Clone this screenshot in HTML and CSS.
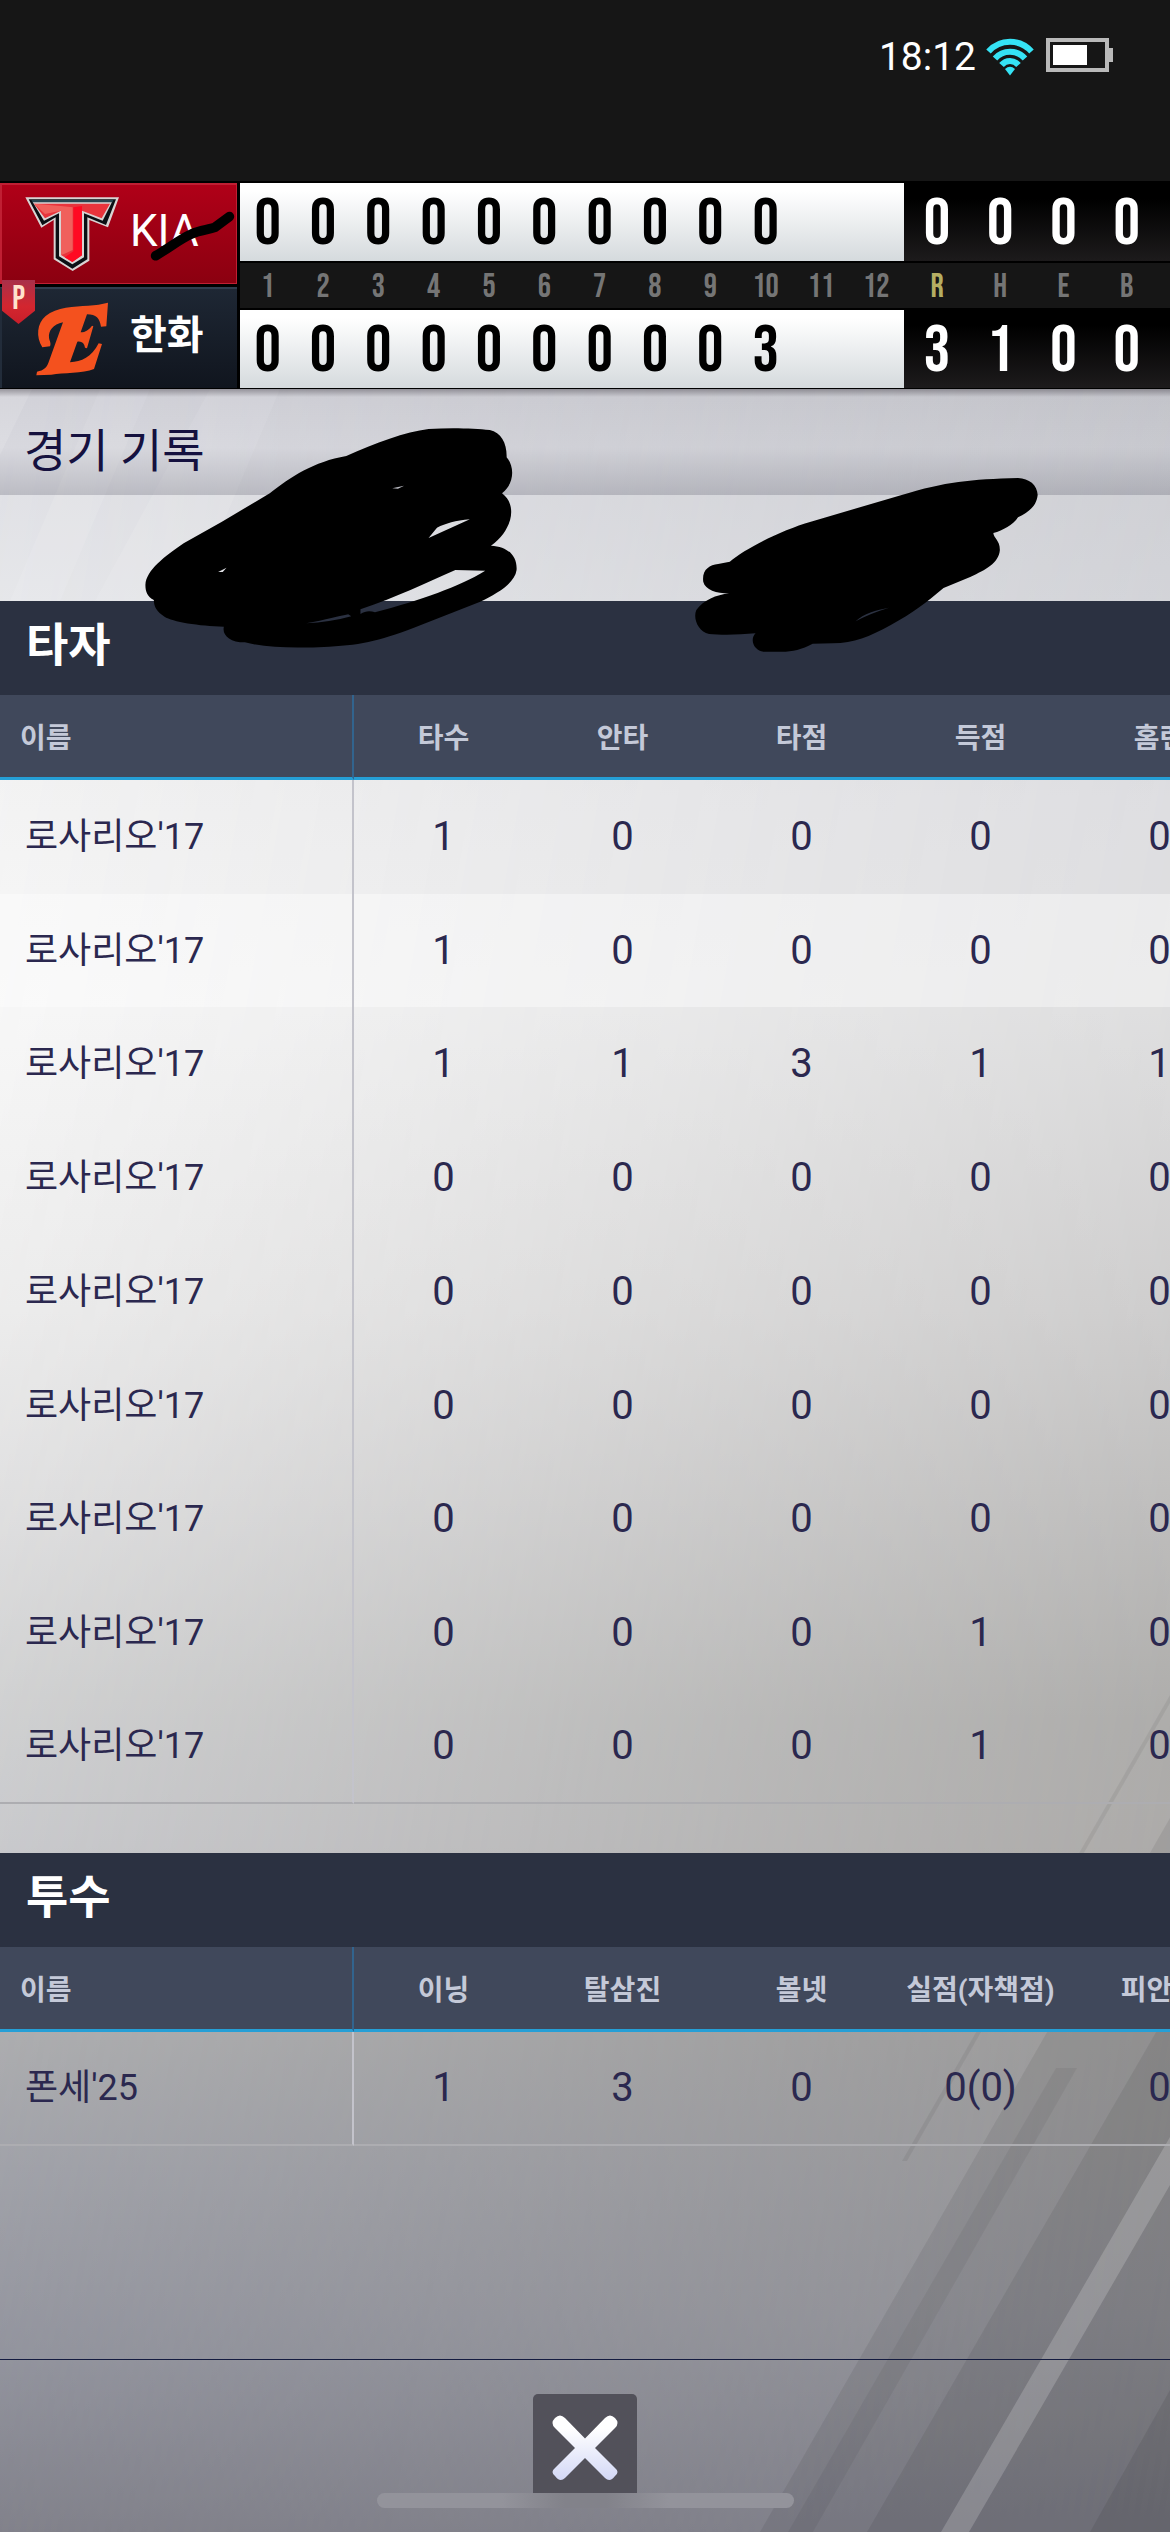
FILE: index.html
```html
<!DOCTYPE html>
<html lang="ko">
<head>
<meta charset="utf-8">
<meta name="viewport" content="width=device-width, initial-scale=1">
<title>경기 기록</title>
<link rel="stylesheet" href="styles.css">
</head>
<body>
<div class="app">
  <div class="statusbar">
    <span class="clock">18:12</span>
    <svg class="wifi" viewBox="0 0 48 38" aria-hidden="true">
      <g fill="none" stroke="#35e3f5" stroke-width="6">
        <path d="M2.500 13.500C14 .5 34 .5 45.500 13.500"/>
        <path d="M9 20.500C17 11.500 31 11.500 39 20.500"/>
        <path d="M15.500 27C20 21.500 28 21.500 32.500 27"/>
      </g>
      <path fill="#35e3f5" d="M19 31Q24 26.500 29 31L24 37.500Z"/>
    </svg>
    <svg class="battery" viewBox="0 0 68 34" aria-hidden="true">
      <rect x="2" y="2" width="59" height="30" fill="none" stroke="#b9b9b9" stroke-width="4"/>
      <rect x="63" y="10" width="4" height="14" fill="#b9b9b9"/>
      <rect x="7" y="7" width="34" height="20" fill="#fff"/>
    </svg>
  </div>

  <header class="scoreboard">
    <div class="teams">
      <div class="team team-away">
        <svg class="logo" viewBox="60 75 300 234" aria-hidden="true">
          <path fill="#d9d3d3" d="M70 82H351L318 172L262 150V272L212 303L155 268V150L118 173Z"/>
          <path fill="#0b0f14" d="M80 88H342L312 165L256 142V268L211 296L161 264V142L121 166Z"/>
          <path fill="#d9d3d3" d="M92 96H330L302 152L246 130V262L211 283L171 259V130L126 152Z"/>
          <path fill="#e8343c" d="M96 101H324L299 145L240 122V256L211 276L177 255V122L129 145Z"/>
          <path fill="#f0605c" d="M96 101L176 108L212 112V240L186 252L177 255V122L129 132Z"/>
          <path fill="#ff0a22" d="M214 112L240 108V256L211 276L188 262L214 244Z"/>
          <path fill="#274550" d="M88 90H334L331 97H92Z"/>
        </svg>
        <span class="team-name">KIA</span>
        <svg class="strike" viewBox="440 110 280 170" aria-hidden="true">
          <path d="M466 256C510 230 540 205 575 190C600 178 625 178 645 170L688 138" fill="none" stroke="#000" stroke-width="29" stroke-linecap="round"/>
        </svg>
      </div>
      <div class="team team-home">
        <svg class="logo" viewBox="67 385 300 234" aria-hidden="true">
          <path fill="#f4511e" d="M325 393L320 464L304 465C300 440 290 428 262 428L243 482C258 482 268 474 277 462L281 464L262 530L256 528C254 514 246 508 233 510L211 572C245 570 276 557 297 515L307 517L283 592C250 605 190 603 155 609L110 611L112 600C133 596 140 588 146 574L190 452C160 458 146 478 148 498C150 510 155 514 151 524L128 527C108 495 112 455 138 433C170 405 225 405 265 402C290 401 305 397 325 393Z"/>
        </svg>
        <span class="team-name">한화</span>
        <span class="badge"><span class="badge-text">P</span></span>
      </div>
    </div>
    <table class="line-score">
      <colgroup><col class="c-inn" span="12"><col class="c-stat" span="4"><col></colgroup>
      <tbody>
        <tr class="runs"><td>0</td><td>0</td><td>0</td><td>0</td><td>0</td><td>0</td><td>0</td><td>0</td><td>0</td><td>0</td><td></td><td></td><td class="total">0</td><td class="total">0</td><td class="total">0</td><td class="total">0</td><td class="total"></td></tr>
        <tr class="labels"><th>1</th><th>2</th><th>3</th><th>4</th><th>5</th><th>6</th><th>7</th><th>8</th><th>9</th><th>10</th><th>11</th><th>12</th><th class="key">R</th><th class="sum">H</th><th class="sum">E</th><th class="sum">B</th><th></th></tr>
        <tr class="runs"><td>0</td><td>0</td><td>0</td><td>0</td><td>0</td><td>0</td><td>0</td><td>0</td><td>0</td><td>3</td><td></td><td></td><td class="total">3</td><td class="total">1</td><td class="total">0</td><td class="total">0</td><td class="total"></td></tr>
      </tbody>
    </table>
  </header>

  <main class="records">
    <svg class="rays" viewBox="0 389 1170 2143" preserveAspectRatio="xMaxYMax slice" aria-hidden="true">
      <path fill="#fff" opacity=".16" d="M0 389H32L0 455Z"/>
      <path fill="#fff" opacity=".1" d="M100 389H150L60 601H10ZM210 389H280L190 601H95Z"/>
      <path fill="#000" opacity=".06" d="M1170 1695V1703L907 2161H902Z"/>
      <path fill="#000" opacity=".07" d="M1170 1818V2532H760Z"/>
      <path fill="#000" opacity=".05" d="M1056 2068H1077L813 2532H788Z"/>
      <path fill="#000" opacity=".07" d="M1170 2008V2532H867Z"/>
      <path fill="#fff" opacity=".18" d="M1170 2137V2185L969 2532H941Z"/>
      <path fill="#000" opacity=".08" d="M1170 2390V2532H1090Z"/>
    </svg>

    <h1 class="page-title">경기 기록</h1>
    <div class="matchup"></div>

    <section>
      <h2 class="section-title">타자</h2>
      <div class="scroller">
        <table class="stats">
          <thead><tr><th class="name">이름</th><th>타수</th><th>안타</th><th>타점</th><th>득점</th><th>홈런</th></tr></thead>
          <tbody>
            <tr><td class="name">로사리오'17</td><td>1</td><td>0</td><td>0</td><td>0</td><td>0</td></tr>
            <tr class="lit"><td class="name">로사리오'17</td><td>1</td><td>0</td><td>0</td><td>0</td><td>0</td></tr>
            <tr><td class="name">로사리오'17</td><td>1</td><td>1</td><td>3</td><td>1</td><td>1</td></tr>
            <tr><td class="name">로사리오'17</td><td>0</td><td>0</td><td>0</td><td>0</td><td>0</td></tr>
            <tr><td class="name">로사리오'17</td><td>0</td><td>0</td><td>0</td><td>0</td><td>0</td></tr>
            <tr><td class="name">로사리오'17</td><td>0</td><td>0</td><td>0</td><td>0</td><td>0</td></tr>
            <tr><td class="name">로사리오'17</td><td>0</td><td>0</td><td>0</td><td>0</td><td>0</td></tr>
            <tr><td class="name">로사리오'17</td><td>0</td><td>0</td><td>0</td><td>1</td><td>0</td></tr>
            <tr><td class="name">로사리오'17</td><td>0</td><td>0</td><td>0</td><td>1</td><td>0</td></tr>
          </tbody>
        </table>
      </div>
    </section>

    <section class="pitchers">
      <h2 class="section-title">투수</h2>
      <div class="scroller">
        <table class="stats">
          <thead><tr><th class="name">이름</th><th>이닝</th><th>탈삼진</th><th>볼넷</th><th>실점(자책점)</th><th>피안타</th></tr></thead>
          <tbody>
            <tr><td class="name">폰세'25</td><td>1</td><td>3</td><td>0</td><td>0(0)</td><td>0</td></tr>
          </tbody>
        </table>
      </div>
    </section>

    <footer class="footer">
      <button class="close" type="button" aria-label="닫기">
        <svg class="close-icon" viewBox="0 0 66 66" aria-hidden="true">
          <defs><linearGradient id="x-fill" x1="0" y1="0" x2="0" y2="1"><stop offset=".2" stop-color="#fff"/><stop offset="1" stop-color="#d3d8f6"/></linearGradient></defs>
          <path fill="url(#x-fill)" d="M3 3Q8-2 13 3L33 23.500L53 3Q58-2 63 3Q68 8 63 13L43 33L63 53Q68 57 63 61Q58 68 53 63L33 43L13 63Q8 68 3 61Q-2 57 3 53L23 33L3 13Q-2 8 3 3Z"/>
        </svg>
      </button>
      <div class="home-bar"></div>
    </footer>

    <svg class="scribble scribble-left" viewBox="0 0 1568 960" preserveAspectRatio="none" aria-hidden="true">
      <path fill-rule="evenodd" d="M380 615C382 570 430 530 480 490L580 425L705 340C760 290 820 245 905 228C980 190 1060 155 1120 147C1180 142 1240 145 1280 150C1310 158 1325 190 1324 232C1345 260 1345 310 1312 340C1335 360 1340 390 1333 420C1325 450 1310 475 1283 497C1330 500 1352 530 1350 570C1345 610 1300 640 1255 665L1100 735C1000 780 950 795 860 800C780 805 700 805 640 787C600 787 580 765 585 740C520 738 450 725 430 710C410 695 402 680 402 660C385 650 380 635 380 615ZM1190 570L1268 572C1200 620 1100 660 980 697C968 692 955 692 942 702V688C1040 650 1110 610 1190 570ZM800 730C850 720 890 707 910 703L918 709C880 722 840 728 800 730ZM1120 474L1142 443C1165 430 1190 422 1228 418ZM1025 325L1056 317L1040 326ZM570 576L592 563L582 576Z"/>
    </svg>
    <svg class="scribble scribble-right" viewBox="0 0 1568 960" preserveAspectRatio="none" aria-hidden="true">
      <path fill-rule="evenodd" d="M357 545C400 505 500 450 580 425L830 345C950 305 1020 298 1150 294C1180 295 1203 315 1204 345C1200 380 1180 395 1150 412C1135 435 1110 450 1082 459C1083 475 1100 480 1100 510C1097 550 1060 570 1020 590L945 624C900 665 860 700 800 735C740 770 700 790 640 790L585 791C555 808 530 815 500 815H450C425 813 410 780 428 760C380 765 330 765 300 762C270 755 255 715 265 690C285 660 320 645 355 640C320 640 290 630 284 605C280 570 300 555 325 552ZM703 724C725 700 760 690 795 683C760 695 730 708 703 724Z"/>
    </svg>
  </main>
</div>
</body>
</html>
```

FILE: styles.css
```css
* { box-sizing: border-box; }

body {
  margin: 0;
  background: #161616;
  font-family: Roboto, "Noto Sans CJK KR", sans-serif;
}

.app {
  display: flex;
  flex-direction: column;
  min-height: 100vh;
  overflow: hidden;
}

/* Status bar */
.statusbar {
  display: flex;
  justify-content: flex-end;
  align-items: flex-start;
  height: 181px;
  padding: 38px 56px 0 0;
  background: #161616;
}
.clock {
  margin-right: 10px;
  color: #fff;
  font-size: 39px;
  font-weight: 400;
  line-height: 38px;
}
.wifi { width: 48px; height: 38px; margin-right: 12px; }
.battery { width: 68px; height: 34px; }

/* Scoreboard */
.scoreboard {
  display: flex;
  border-top: 2px solid #000;
  border-bottom: 1px solid #000;
  background: #000;
}
.teams {
  display: flex;
  flex: none;
  flex-direction: column;
  gap: 3px;
  width: 237px;
  margin-right: 3px;
}
.team {
  position: relative;
  display: flex;
  align-items: center;
  gap: 8px;
  height: 101px;
  padding-left: 20px;
  color: #fff;
}
.team-away {
  border: 2px solid #c01f33;
  border-width: 2px 1px 1px 2px;
  background: linear-gradient(#b00018, #8b0010);
}
.team-home {
  border-top: 2px solid #303d4e;
  border-left: 2px solid #222c3a;
  background: linear-gradient(#1e2734, #10151e);
}
.logo { width: 100px; height: 78px; }
.team-name { padding-bottom: 6px; font-size: 40px; font-weight: 700; line-height: 48px; }
.team-away .team-name { font-size: 44px; font-weight: 400; }
.strike { position: absolute; left: 145px; top: 22px; width: 93px; height: 57px; }
.badge {
  position: absolute;
  left: 0;
  top: -9px;
  width: 33px;
  height: 44px;
  background: linear-gradient(#a8304a, #d3262f 60%, #c81e2a);
  clip-path: polygon(0 0, 100% 0, 100% 70%, 50% 100%, 0 70%);
  text-align: center;
}
.badge-text {
  color: #ffe2cc;
  font-family: "Bebas Neue", "Roboto Condensed", "Liberation Sans Narrow", "Liberation Sans", sans-serif;
  font-size: 33px;
  font-weight: 400;
  line-height: 38px;
}

.line-score {
  flex: 1;
  width: 100%;
  table-layout: fixed;
  border-spacing: 0;
  font-family: "Bebas Neue", "Roboto Condensed", "Liberation Sans Narrow", "Liberation Sans", sans-serif;
  text-align: center;
}
.c-inn { width: 5.95%; }
.c-stat { width: 6.8%; }
.line-score td, .line-score th { padding: 0; }
.line-score .runs td {
  height: 78px;
  padding-top: 6px;
  background: linear-gradient(#fff 10%, #d5dadd);
  color: #000;
  font-size: 66px;
  font-weight: 400;
  line-height: 72px;
}
.line-score .runs td.total {
  padding-left: 3px;
  background: linear-gradient(#000 20%, #1d1b1c);
  color: #fff;
}
.line-score .labels th {
  height: 49px;
  padding-top: 3px;
  border-top: 2px solid #000;
  border-bottom: 2px solid #000;
  background: #161616;
  color: #757575;
  font-size: 33px;
  font-weight: 400;
  line-height: 42px;
}
.line-score .labels th.key { padding-left: 3px; color: #b5ae62; }
.line-score .labels th.sum { padding-left: 3px; }

/* Records */
.records {
  position: relative;
  z-index: 0;
  display: flex;
  flex: 1;
  flex-direction: column;
  background: linear-gradient(#c8c9ce, #cecfd4 10%, #d9d9dd 19%, #d9d9da 29%, #c9c8c8 43%, #bab9b8 52%, #aaa9a7 62%, #aaa8a6 68%, #9b9a9a 77%, #929297 90%, #80808a);
}
.records::before {
  content: "";
  position: absolute;
  inset: 0;
  z-index: -1;
  background: linear-gradient(#dcdce2, #e6e7ea 10%, #f3f3f3 18%, #f9f9f9 29%, #f0f0f0 43%, #e5e5e6 52%, #d7d8d9 61%, #cfd0d4 68%, #b0b1b4 77%, #a3a5ad 83%, #9395a0 92%, #82828b);
  -webkit-mask-image: linear-gradient(100deg, #000, transparent);
  mask-image: linear-gradient(100deg, #000, transparent);
}
.rays { position: absolute; inset: 0; z-index: -1; width: 100%; height: 100%; }

.page-title {
  height: 106px;
  margin: 0;
  padding: 32px 24px 0;
  background: linear-gradient(rgba(40, 35, 45, .4), rgba(40, 40, 60, .06) 8px, rgba(40, 40, 70, .04) 55%, rgba(40, 40, 60, .2));
  color: #15113f;
  font-size: 46px;
  font-weight: 400;
  line-height: 60px;
}
.matchup { height: 106px; }

.section-title {
  height: 94px;
  margin: 0;
  padding: 14px 26px 0;
  background: #2b3141;
  color: #fff;
  font-size: 46px;
  font-weight: 700;
  line-height: 60px;
}
.pitchers { margin-top: 49px; }

.scroller { overflow: hidden; }
.stats {
  width: 1249px;
  table-layout: fixed;
  border-spacing: 0;
  text-align: center;
}
.stats th, .stats td { padding: 0; }
.stats th {
  height: 85px;
  padding-top: 5px;
  border-bottom: 3px solid #259fd6;
  background: #40485b;
  color: #c4c9d8;
  font-size: 28px;
  font-weight: 700;
  line-height: 40px;
}
.stats .name {
  width: 354px;
  border-right: 2px solid #c3c3cb;
  text-align: left;
}
.stats th.name { padding-left: 20px; border-right-color: #32648e; }
.stats td {
  height: 114px;
  color: #2b284f;
  font-size: 40px;
  line-height: 48px;
}
.stats td.name { padding-left: 25px; font-size: 36px; }
.stats tr:nth-child(4n+2) td { height: 113px; }
.stats tr.lit { background: rgba(255, 255, 255, .4); }
.stats tr:last-child td { border-bottom: 2px solid #adadb1; }

.footer {
  position: relative;
  display: flex;
  justify-content: center;
  height: 173px;
  margin-top: auto;
  padding-top: 34px;
  border-top: 1px solid #141b40;
}
.close {
  display: grid;
  place-items: center;
  width: 104px;
  height: 107px;
  padding: 0;
  border: 0;
  border-radius: 5px;
  background: #52515a;
}
.close-icon { width: 66px; height: 66px; }
.home-bar {
  position: absolute;
  left: 50%;
  bottom: 24px;
  width: 417px;
  height: 15px;
  margin-left: -208px;
  border-radius: 8px;
  background: linear-gradient(90deg, #93939b 30%, #82828a 45%, #82828a 55%, #93939b 70%);
}

/* Hand-drawn marks over the player names */
.scribble { position: absolute; top: -9px; height: 320px; }
.scribble-left { left: 0; width: 600px; }
.scribble-right { left: 600px; width: 570px; }
```
